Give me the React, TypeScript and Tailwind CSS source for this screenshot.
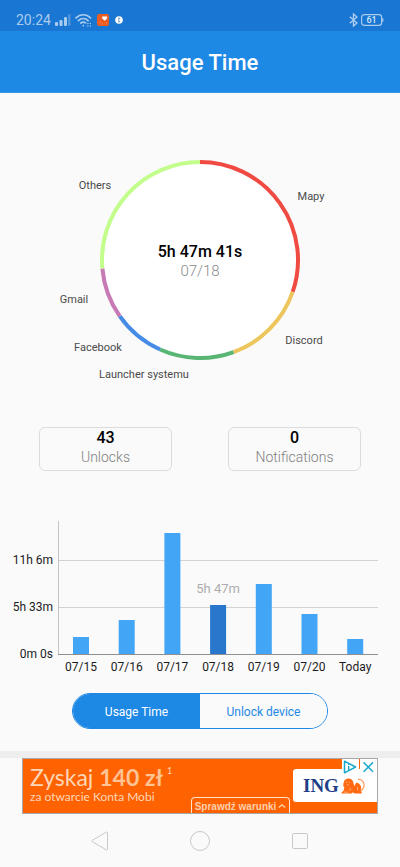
import type { ReactNode } from "react"
import { useState } from "react"

type Slice = {
  name: string
  color: string
  from: number
  to: number
  x: number
  y: number
}

type Day = {
  label: string
  height: number
  value?: string
}

const SLICES: Slice[] = [
  { name: "Mapy", color: "#f04b43", from: 0, to: 109, x: 311, y: 50 },
  { name: "Discord", color: "#ecc55c", from: 109, to: 160, x: 304, y: 194 },
  { name: "Launcher systemu", color: "#59b573", from: 160, to: 204, x: 144, y: 228 },
  { name: "Facebook", color: "#468ce6", from: 204, to: 235, x: 98, y: 201 },
  { name: "Gmail", color: "#c77ab3", from: 235, to: 265, x: 74, y: 153 },
  { name: "Others", color: "#c3fd8c", from: 265, to: 360, x: 95, y: 39 },
]

const DAYS: Day[] = [
  { label: "07/15", height: 17 },
  { label: "07/16", height: 34 },
  { label: "07/17", height: 121 },
  { label: "07/18", height: 49, value: "5h 47m" },
  { label: "07/19", height: 70 },
  { label: "07/20", height: 40 },
  { label: "Today", height: 15 },
]

const GRID = [
  { label: "11h 6m", y: 45 },
  { label: "5h 33m", y: 92 },
]

const CX = 200
const CY = 110
const RADIUS = 98
const BASELINE = 139

function arc(from: number, to: number) {
  const point = (deg: number) => {
    const rad = ((deg - 90) * Math.PI) / 180
    return `${CX + RADIUS * Math.cos(rad)} ${CY + RADIUS * Math.sin(rad)}`
  }
  return `M ${point(from)} A ${RADIUS} ${RADIUS} 0 ${to - from > 180 ? 1 : 0} 1 ${point(to)}`
}

function StatusBar() {
  return (
    <div className="flex h-[31px] items-center bg-[#1976d2] px-4 pt-2 text-[#a9cbee]">
      <span className="text-sm leading-4">20:24</span>
      <svg className="ml-1 h-3 w-4" viewBox="0 0 16 12" fill="currentColor" aria-hidden>
        <rect x="0" y="8" width="3" height="4" rx="1" />
        <rect x="4.5" y="6" width="3" height="6" rx="1" />
        <rect x="9" y="3" width="3" height="9" rx="1" />
        <rect x="13" y="0" width="2.6" height="12" rx="1" opacity="0.35" />
      </svg>
      <svg className="ml-1 h-[14px] w-[17px]" viewBox="0 0 17 14" fill="none" stroke="currentColor" strokeWidth="1.7" strokeLinecap="round" aria-hidden>
        <path d="M1 4.9C5.2.7 11.3.7 15.5 4.9" />
        <path d="M3.4 7.7c2.9-2.8 6.8-2.8 9.7 0" />
        <path d="M5.8 10.2c1.4-1.3 3.3-1.4 4.8-.3" />
        <path d="M8.2 12.6h.1" />
        <path d="M12.9 10.4v.1M15.3 10.4v.1M12.9 12.9v.1M15.3 12.9v.1" strokeWidth="1.4" />
      </svg>
      <svg className="ml-[5px] h-3 w-3" viewBox="0 0 12 12" aria-hidden>
        <rect width="12" height="12" rx="2" fill="#e95d22" />
        <path d="M5.2 2.4h4.9v2L7.7 6.8 5.2 4.6z" fill="#fff" />
        <path d="M2.5 8.5h1M5 10h1M9 9h1" stroke="#f59a6c" strokeWidth="0.8" />
      </svg>
      <svg className="ml-[6px] h-2 w-2" viewBox="0 0 8 8" aria-hidden>
        <circle cx="4" cy="4" r="3.8" fill="#fff" />
        <path d="M3 2.2h2L3.2 4 5 5.7H3" fill="none" stroke="#5b87b3" strokeWidth="0.8" />
      </svg>
      <svg className="ml-auto h-[14px] w-[9px]" viewBox="0 0 9 14" fill="none" stroke="currentColor" strokeWidth="1.4" aria-hidden>
        <path d="M.8 3.8 8 10 4.5 13V1L8 4 .8 10.2" />
      </svg>
      <svg className="ml-[3px] h-3 w-[23px]" viewBox="0 0 23 12" aria-hidden>
        <rect x="0.6" y="0.6" width="20" height="10.8" rx="2.6" fill="none" stroke="currentColor" strokeWidth="1.2" />
        <path d="M21.8 4.2v3.6" stroke="currentColor" strokeWidth="1.2" />
        <text x="10.5" y="9" textAnchor="middle" fontSize="9" fontWeight="500" fill="#d5e6f8">
          61
        </text>
      </svg>
    </div>
  )
}

function UsageRing() {
  return (
    <svg className="mt-[57px] w-full" viewBox="0 0 400 240" role="img" aria-label="Usage by app">
      <circle cx={CX} cy={CY} r={RADIUS} fill="#fff" />
      {SLICES.map((slice) => (
        <g key={slice.name}>
          <path d={arc(slice.from, slice.to)} fill="none" stroke={slice.color} strokeWidth="4" />
          <text x={slice.x} y={slice.y} textAnchor="middle" fontSize="11" fill="#4a4a4a">
            {slice.name}
          </text>
        </g>
      ))}
      <text x={CX} y="107" textAnchor="middle" fontSize="16" fontWeight="500" fill="#000">
        5h 47m 41s
      </text>
      <text x={CX} y="126" textAnchor="middle" fontSize="15" fontWeight="300" fill="#8a8a8a">
        07/18
      </text>
    </svg>
  )
}

function Stat({ value, label }: { value: string; label: string }) {
  return (
    <div className="flex h-11 flex-col items-center rounded-md border border-[#dcdcdc] text-center">
      <span className="text-base leading-5 font-medium text-black">{value}</span>
      <span className="text-sm leading-[18px] font-light text-[#808080]">{label}</span>
    </div>
  )
}

function WeekChart() {
  return (
    <svg className="mt-11 w-full" viewBox="0 0 400 160" role="img" aria-label="Usage per day">
      {GRID.map((line) => (
        <g key={line.label}>
          <path d={`M58 ${line.y + 0.5}H378`} stroke="#d2d2d2" />
          <text x="53" y={line.y + 4} textAnchor="end" fontSize="12" fill="#1c1c1c">
            {line.label}
          </text>
        </g>
      ))}
      <text x="53" y="143" textAnchor="end" fontSize="12" fill="#1c1c1c">
        0m 0s
      </text>
      {DAYS.map((day, i) => {
        const x = 81 + i * 45.7
        return (
          <g key={day.label}>
            <rect
              x={x - 8}
              y={BASELINE - day.height}
              width="16"
              height={day.height}
              fill={day.value ? "#2977cd" : "#42a5f5"}
            />
            {day.value && (
              <text x={x} y={BASELINE - day.height - 12} textAnchor="middle" fontSize="13" fill="#adadad">
                {day.value}
              </text>
            )}
            <text x={x} y="156" textAnchor="middle" fontSize="12" fill="#1c1c1c">
              {day.label}
            </text>
          </g>
        )
      })}
      <path d="M58.5 6V139" stroke="#c4c4c4" />
      <path d="M58 139.5H378" stroke="#909090" />
    </svg>
  )
}

function ModeButton({ active, onClick, children }: { active: boolean; onClick: () => void; children: ReactNode }) {
  return (
    <button
      type="button"
      aria-pressed={active}
      onClick={onClick}
      className={`flex-1 pt-0.5 text-xs ${active ? "bg-[#1e88e5] text-white" : "bg-[#fafafa] text-[#1e88e5]"}`}
    >
      {children}
    </button>
  )
}

function AdBanner() {
  return (
    <aside className="border-t-[7px] border-[#eeeeee] px-[22px]">
      <div className="relative flex h-14 justify-between overflow-hidden border border-[#a8a8a8] bg-[#ff6200] font-['Lato',sans-serif]">
        <a href="#ad" className="block pt-1 pl-[7px] whitespace-nowrap text-[#ffd6b8]">
          <span className="block text-[23px] leading-7">
            Zyskaj <b className="text-[#ffc394]">140 zł</b>
            <sup className="-top-3 ml-1 text-[9px]">1</sup>
          </span>
          <span className="block text-xs leading-3">za otwarcie Konta Mobi</span>
        </a>
        <div className="mt-[10px] flex h-[33px] w-[84px] items-center rounded-l-[3px] bg-white pl-[10px]">
          <span className="font-['Liberation_Serif',serif] text-[19px] leading-5 font-bold text-[#1f3f86]">ING</span>
          <svg className="ml-[2px] h-4 w-6" viewBox="0 0 24 16" aria-hidden>
            <path
              d="M.6 15.6c-.2-1.4.6-2.2 1.8-2.6L3.4 9.6C2 8.400 2 6 2.800 4.200 3.400 1.700 5.200.4 7.400.5c2.900 0 4.700 1.700 5 4.500l1.200 3.200c.6-2 1.200-3.200 2-3.800 2.600.8 4.400 2.600 4.600 5l-.4 3.600c1 .4 1.200 1.600.6 2.500h-6.800l-1.800-1.200-1 1.200z"
              fill="#ff6a13"
            />
            <path d="M17 1.2c4.600.2 6.800 3.800 5.800 7.600-.5 2-1.600 3.200-3.200 3.800" fill="none" stroke="#ff9a5c" strokeWidth="1.2" />
            <path d="M5 4.200h1.400M8 4.200h1M5.800 6.800l2 .2M9.600 10l-.8 3M16.400 8.800l.2 3.400M2.800 14.200h4" fill="none" stroke="#ffd8bf" strokeWidth="0.6" />
          </svg>
        </div>
        <button
          type="button"
          className="absolute right-[87px] -bottom-px flex h-[17px] w-[99px] items-center justify-center gap-0.5 rounded-t-[4px] border border-b-0 border-[#ffe3cf] font-['Liberation_Sans',sans-serif] text-[10px] font-bold whitespace-nowrap text-[#ffcfae]"
        >
          Sprawdź warunki
          <svg className="h-1 w-2" viewBox="0 0 8 4" fill="none" stroke="currentColor" strokeWidth="1.3" aria-hidden>
            <path d="M.8 3.6 4 .8l3.2 2.8" />
          </svg>
        </button>
        <div className="absolute top-0 right-0 flex h-4 w-[35px] justify-between bg-white">
          <a href="#adchoices" aria-label="AdChoices" className="h-4 w-4">
            <svg className="h-4 w-4" viewBox="0 0 16 16" fill="none" stroke="#1ba8cd" aria-hidden>
              <path d="M2.5 2.2 13.6 8 2.5 13.8z" strokeWidth="1.5" strokeLinejoin="round" />
              <path d="M6.7 7v4M6.7 4.8V6" strokeWidth="1.4" />
            </svg>
          </a>
          <span className="h-[10px] w-px bg-[#ff6200]" />
          <button type="button" aria-label="Close ad" className="h-4 w-[17px]">
            <svg className="h-4 w-[17px]" viewBox="0 0 17 16" fill="none" stroke="#1ba8cd" strokeWidth="1.5" aria-hidden>
              <path d="m3.6 3.4 9.4 9.4M13 3.4l-9.4 9.4" />
            </svg>
          </button>
        </div>
      </div>
    </aside>
  )
}

function NavBar() {
  return (
    <nav className="flex h-[53px] items-center justify-center gap-20 text-[#c8c8c8]">
      <button type="button" aria-label="Back">
        <svg className="h-5 w-5" viewBox="0 0 20 20" fill="none" stroke="currentColor" strokeLinejoin="round" aria-hidden>
          <path d="M17.5 1.8v16.4c0 .8-.6 1.1-1.2.7L2.4 10.7c-.6-.4-.6-1 0-1.4l13.9-8.2c.6-.4 1.2-.1 1.2.7z" />
        </svg>
      </button>
      <button type="button" aria-label="Home">
        <svg className="h-5 w-5" viewBox="0 0 20 20" fill="none" stroke="currentColor" aria-hidden>
          <circle cx="10" cy="10" r="9.5" />
        </svg>
      </button>
      <button type="button" aria-label="Recent apps">
        <svg className="h-5 w-5" viewBox="0 0 20 20" fill="none" stroke="currentColor" aria-hidden>
          <rect x="2.5" y="2.5" width="15" height="15" rx="1.5" />
        </svg>
      </button>
    </nav>
  )
}

export default function App() {
  const [mode, setMode] = useState<"usage" | "unlock">("usage")

  return (
    <div className="min-h-screen bg-[#fafafa] font-['Roboto',sans-serif]">
      <StatusBar />
      <header className="flex h-[62px] items-center justify-center border-b border-[#3a94e6] bg-[#1e88e5] pt-0.5">
        <h1 className="text-[22px] leading-7 font-medium text-white">Usage Time</h1>
      </header>

      <main>
        <UsageRing />
        <div className="mt-[37px] grid grid-cols-2 gap-14 px-[39px]">
          <Stat value="43" label="Unlocks" />
          <Stat value="0" label="Notifications" />
        </div>
        <WeekChart />
        <div className="mx-auto mt-[18px] flex h-9 w-64 overflow-hidden rounded-full border border-[#1e88e5]">
          <ModeButton active={mode === "usage"} onClick={() => setMode("usage")}>
            Usage Time
          </ModeButton>
          <ModeButton active={mode === "unlock"} onClick={() => setMode("unlock")}>
            Unlock device
          </ModeButton>
        </div>
      </main>

      <div className="mt-[22px]">
        <AdBanner />
        <NavBar />
      </div>
    </div>
  )
}
